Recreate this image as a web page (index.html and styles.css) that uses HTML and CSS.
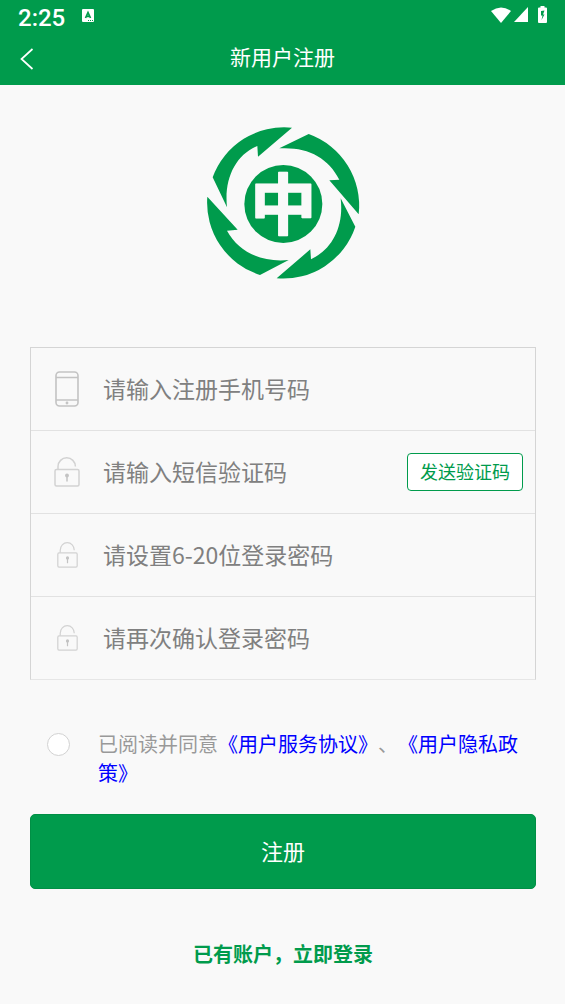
FILE: index.html
```html
<!DOCTYPE html>
<html lang="zh-CN">
<head>
<meta charset="utf-8">
<meta name="viewport" content="width=device-width, initial-scale=1">
<title>新用户注册</title>
<link rel="stylesheet" href="styles.css">
</head>
<body>
<header class="header">
  <div class="status">
    <span class="time">2:25</span>
    <svg class="app-badge" width="12" height="13" viewBox="0 0 12 13" aria-hidden="true">
      <rect width="12" height="13" rx="1" fill="#fff"/>
      <path d="M3.500 9 6 3.500 8.500 9M4.500 7.300h3" fill="none" stroke="#009b4c" stroke-width="1.700"/>
      <path d="M6 11.500h1m1 0h1m1 0h1" stroke="#009b4c"/>
    </svg>
    <span class="signals">
      <svg width="20" height="16" viewBox="0 0 20 16" aria-hidden="true"><path d="M0 4Q10-3 20 4L10 16Z" fill="#fff"/></svg>
      <svg width="14" height="15" viewBox="0 0 14 15" aria-hidden="true"><path d="M14 0V15H0Z" fill="#fff"/></svg>
      <svg class="battery" width="9" height="17" viewBox="0 0 9 17" aria-hidden="true">
        <path d="M2.500 0h4v1.500H8q1 0 1 1V16q0 1-1 1H1q-1 0-1-1V2.500q0-1 1-1h1.500Z" fill="#fff"/>
        <path d="M6.500 4.500 3 5v4.500h1.500L3.500 14 6.500 8.500H5Z" fill="#009b4c"/>
      </svg>
    </span>
  </div>
  <div class="titlebar">
    <button class="back" type="button" aria-label="返回">
      <svg width="14" height="22" viewBox="0 0 14 22" aria-hidden="true"><path d="M12.500 1 1.500 11l11 10" fill="none" stroke="#fff" stroke-width="1.700"/></svg>
    </button>
    <h1 class="title">新用户注册</h1>
  </div>
</header>

<main class="main">
  <svg class="logo" width="166" height="166" viewBox="0 0 498 498" role="img" aria-label="中">
    <g fill="#009b4c">
      <path d="M38 172A228 228 0 0 1 276 23L174 110 172 78C106 106 72 176 81 262Z"/>
      <path d="M238 85 326 42A228 228 0 0 1 476 283L388 181 418 179C384 112 322 80 238 85Z"/>
      <path d="M422 235 466 320A228 228 0 0 1 230 475L331 388 333 418C396 388 432 322 422 235Z"/>
      <path d="M22 230 113 329 81 332C116 396 184 428 266 420L180 465A228 228 0 0 1 22 230Z"/>
      <circle cx="250" cy="252" r="117"/>
    </g>
    <text class="logo-mark" x="250" y="328" text-anchor="middle">中</text>
  </svg>

  <form class="form">
    <div class="fields">
      <div class="row">
        <label class="icon" for="phone" aria-label="手机号码">
          <svg width="24" height="36" viewBox="0 0 24 36" fill="none" stroke="#c3c3c3" stroke-width="1.600">
            <rect x="1" y="1" width="22" height="34" rx="3.500"/><path d="M1 6.500h22M1 29h22"/><circle cx="12" cy="32" r=".6"/>
          </svg>
        </label>
        <input class="input" id="phone" type="tel" placeholder="请输入注册手机号码">
      </div>
      <div class="row">
        <label class="icon" for="code" aria-label="短信验证码">
          <svg width="26" height="30" viewBox="0 0 26 30" fill="none" stroke="#d2d2d2" stroke-width="1.500">
            <rect x="1" y="12.500" width="24" height="16.500" rx="1.500"/><path d="M4 12.500V9.500a8.700 8.700 0 0 1 17.400 0"/><path d="M13 19v5.500" stroke="#c3c3c3"/><circle cx="13" cy="18.500" r="1.200" fill="#c3c3c3" stroke="#c3c3c3"/>
          </svg>
        </label>
        <input class="input" id="code" type="text" placeholder="请输入短信验证码">
        <button class="send" type="button">发送验证码</button>
      </div>
      <div class="row">
        <label class="icon" for="pwd" aria-label="登录密码">
          <svg width="21" height="26" viewBox="0 0 26 30" preserveAspectRatio="none" fill="none" stroke="#d2d2d2" stroke-width="1.500">
            <rect x="1" y="12.500" width="24" height="16.500" rx="1.500"/><path d="M4 12.500V9.500a8.700 8.700 0 0 1 17.400 0"/><path d="M13 19v5.500" stroke="#c3c3c3"/><circle cx="13" cy="18.500" r="1.200" fill="#c3c3c3" stroke="#c3c3c3"/>
          </svg>
        </label>
        <input class="input" id="pwd" type="password" placeholder="请设置6-20位登录密码">
      </div>
      <div class="row">
        <label class="icon" for="pwd2" aria-label="确认登录密码">
          <svg width="21" height="26" viewBox="0 0 26 30" preserveAspectRatio="none" fill="none" stroke="#d2d2d2" stroke-width="1.500">
            <rect x="1" y="12.500" width="24" height="16.500" rx="1.500"/><path d="M4 12.500V9.500a8.700 8.700 0 0 1 17.400 0"/><path d="M13 19v5.500" stroke="#c3c3c3"/><circle cx="13" cy="18.500" r="1.200" fill="#c3c3c3" stroke="#c3c3c3"/>
          </svg>
        </label>
        <input class="input" id="pwd2" type="password" placeholder="请再次确认登录密码">
      </div>
    </div>

    <div class="agree">
      <input class="check" id="agree" type="checkbox">
      <p class="agree-text"><label for="agree">已阅读并同意</label><a class="link" href="#">《用户服务协议》</a>、<a class="link" href="#">《用户隐私政策》</a></p>
    </div>

    <button class="submit" type="submit">注册</button>
  </form>
  <a class="login" href="#">已有账户，立即登录</a>
</main>
</body>
</html>
```
FILE: styles.css
```css
* {
  box-sizing: border-box;
}

body {
  margin: 0;
  background: #f9f9f9;
  font-family: "Noto Sans CJK SC", sans-serif;
  text-spacing-trim: space-all;
}

button,
input {
  font-family: inherit;
  margin: 0;
}

.header {
  background: #009b4c;
  color: #fff;
}

.status {
  display: flex;
  align-items: flex-start;
  height: 32px;
  padding: 0 18px;
  gap: 17px;
}

.time {
  font: 500 24px/36px Roboto, sans-serif;
}

.app-badge {
  margin-top: 9px;
}

.signals {
  display: flex;
  align-items: center;
  gap: 3px;
  margin-top: 6px;
  margin-left: auto;
}

.battery {
  margin-left: 7px;
}

.titlebar {
  display: grid;
  grid-template-columns: 40px 1fr 40px;
  align-items: center;
  height: 53px;
  padding: 0 12px;
}

.back {
  display: flex;
  padding: 8px;
  border: 0;
  background: none;
}

.title {
  margin: 0;
  padding-bottom: 6px;
  font-size: 21px;
  line-height: 32px;
  font-weight: 400;
  text-align: center;
}

.main {
  display: flex;
  flex-direction: column;
  padding: 35px 29px 32px 30px;
}

.logo {
  align-self: center;
}

.logo-mark {
  font-size: 198px;
  font-weight: 700;
  fill: #f9f9f9;
  stroke: #f9f9f9;
  stroke-width: 5px;
  stroke-linejoin: round;
}

.form {
  margin-top: 61px;
}

.fields {
  border: 1px solid #d5d5d5;
  border-bottom-color: #e6e6e6;
}

.row {
  display: flex;
  align-items: center;
  height: 82px;
  padding-right: 12px;
}

.row + .row {
  height: 83px;
  border-top: 1px solid #e2e2e2;
}

.icon {
  display: flex;
  justify-content: center;
  flex: none;
  width: 72px;
}

.input {
  flex: 1;
  min-width: 0;
  height: 48px;
  padding: 0 0 3px;
  border: 0;
  outline: 0;
  background: none;
  font-size: 23px;
  color: #333;
}

.input::placeholder {
  color: #808080;
  opacity: 1;
}

.send {
  flex: none;
  width: 116px;
  height: 38px;
  padding: 0 0 3px;
  border: 1px solid #009b4c;
  border-radius: 4px;
  background: #fff;
  color: #009b4c;
  font-size: 18px;
  line-height: 32px;
}

.agree {
  display: flex;
  align-items: flex-start;
  gap: 28px;
  margin-top: 49px;
  padding-left: 17px;
}

.check {
  appearance: none;
  flex: none;
  width: 23px;
  height: 23px;
  margin-top: 4px;
  border: 1px solid #d2d2d2;
  border-radius: 50%;
  background: #fff;
}

.check:checked {
  background: #009b4c;
}

.agree-text {
  margin: 0;
  font-size: 20px;
  line-height: 29px;
  color: #999;
}

.link {
  color: #00f;
  text-decoration: none;
}

.submit {
  display: block;
  width: 100%;
  height: 75px;
  margin-top: 27px;
  padding: 0 0 3px;
  border: 1px solid #008f45;
  border-radius: 5px;
  background: #009b4c;
  color: #fff;
  font-size: 22px;
}

.login {
  align-self: center;
  margin-top: 50px;
  font-size: 20px;
  line-height: 30px;
  font-weight: 700;
  color: #009b4c;
  text-decoration: none;
}
```
